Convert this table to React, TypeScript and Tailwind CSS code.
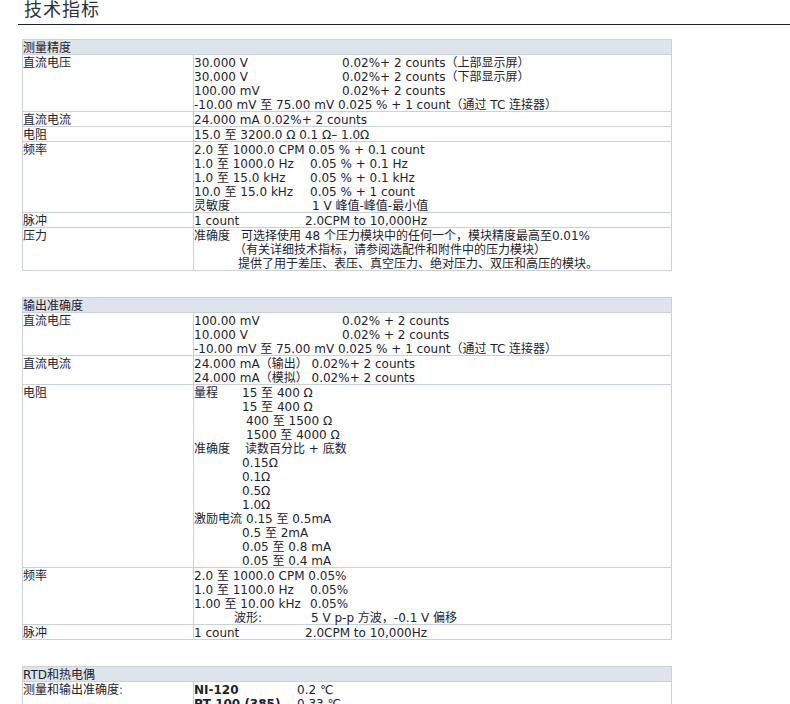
import type { ReactNode } from "react";

interface RowProps {
  label: ReactNode;
  lines: ReactNode[];
}

const Line = ({ children }: { children?: ReactNode }) => (
  <div className="h-[14px] leading-[16px] whitespace-pre">{children}</div>
);

const Row = ({ label, lines }: RowProps) => (
  <div className="flex">
    <div className="w-[171px] shrink-0 border-r border-[#c9d1d9]">
      <Line>{label}</Line>
    </div>
    <div className="flex-1">
      {lines.map((l, i) => (
        <Line key={i}>{l}</Line>
      ))}
    </div>
  </div>
);

const Section = ({ title, rows, className }: { title: string; rows: RowProps[]; className: string }) => (
  <div className={"ml-[22px] w-[650px] border border-[#c9d1d9] divide-y divide-[#c9d1d9] " + className}>
    <div className="bg-[#dde4ec]">
      <Line>{title}</Line>
    </div>
    {rows.map((r, i) => (
      <Row key={i} label={r.label} lines={r.lines} />
    ))}
  </div>
);

const measure: RowProps[] = [
  {
    label: "直流电压",
    lines: [
      <><span className="inline-block w-[148px]">30.000 V</span>0.02%+ 2 counts（上部显示屏）</>,
      <><span className="inline-block w-[148px]">30.000 V</span>0.02%+ 2 counts（下部显示屏）</>,
      <><span className="inline-block w-[148px]">100.00 mV</span>0.02%+ 2 counts</>,
      "-10.00 mV 至 75.00 mV 0.025 % + 1 count（通过 TC 连接器）",
    ],
  },
  { label: "直流电流", lines: ["24.000 mA 0.02%+ 2 counts"] },
  { label: "电阻", lines: ["15.0 至 3200.0 Ω 0.1 Ω– 1.0Ω"] },
  {
    label: "频率",
    lines: [
      "2.0 至 1000.0 CPM 0.05 % + 0.1 count",
      <><span className="inline-block w-[116px]">1.0 至 1000.0 Hz</span>0.05 % + 0.1 Hz</>,
      <><span className="inline-block w-[116px]">1.0 至 15.0 kHz</span>0.05 % + 0.1 kHz</>,
      <><span className="inline-block w-[116px]">10.0 至 15.0 kHz</span>0.05 % + 1 count</>,
      <><span className="inline-block w-[118px]">灵敏度</span>1 V 峰值-峰值-最小值</>,
    ],
  },
  {
    label: "脉冲",
    lines: [<><span className="inline-block w-[111px]">1 count</span>2.0CPM to 10,000Hz</>],
  },
  {
    label: "压力",
    lines: [
      <><span className="inline-block w-[47px]">准确度</span>可选择使用 48 个压力模块中的任何一个，模块精度最高至0.01%</>,
      <><span className="inline-block w-[40px]" />（有关详细技术指标，请参阅选配件和附件中的压力模块）</>,
      <><span className="inline-block w-[44px]" />提供了用于差压、表压、真空压力、绝对压力、双压和高压的模块。</>,
    ],
  },
];

const output: RowProps[] = [
  {
    label: "直流电压",
    lines: [
      <><span className="inline-block w-[148px]">100.00 mV</span>0.02% + 2 counts</>,
      <><span className="inline-block w-[148px]">10.000 V</span>0.02% + 2 counts</>,
      "-10.00 mV 至 75.00 mV 0.025 % + 1 count（通过 TC 连接器）",
    ],
  },
  {
    label: "直流电流",
    lines: ["24.000 mA（输出） 0.02%+ 2 counts", "24.000 mA（模拟） 0.02%+ 2 counts"],
  },
  {
    label: "电阻",
    lines: [
      <><span className="inline-block w-[48px]">量程</span>15 至 400 Ω</>,
      <><span className="inline-block w-[48px]" />15 至 400 Ω</>,
      <><span className="inline-block w-[52px]" />400 至 1500 Ω</>,
      <><span className="inline-block w-[52px]" />1500 至 4000 Ω</>,
      <><span className="inline-block w-[51px]">准确度</span>读数百分比 + 底数</>,
      <><span className="inline-block w-[48px]" />0.15Ω</>,
      <><span className="inline-block w-[48px]" />0.1Ω</>,
      <><span className="inline-block w-[48px]" />0.5Ω</>,
      <><span className="inline-block w-[48px]" />1.0Ω</>,
      <><span className="inline-block w-[52px]">激励电流</span>0.15 至 0.5mA</>,
      <><span className="inline-block w-[48px]" />0.5 至 2mA</>,
      <><span className="inline-block w-[48px]" />0.05 至 0.8 mA</>,
      <><span className="inline-block w-[48px]" />0.05 至 0.4 mA</>,
    ],
  },
  {
    label: "频率",
    lines: [
      "2.0 至 1000.0 CPM 0.05%",
      <><span className="inline-block w-[116px]">1.0 至 1100.0 Hz</span>0.05%</>,
      <><span className="inline-block w-[116px]">1.00 至 10.00 kHz</span>0.05%</>,
      <><span className="inline-block w-[40px]" /><span className="inline-block w-[77px]">波形:</span>5 V p-p 方波，-0.1 V 偏移</>,
    ],
  },
  {
    label: "脉冲",
    lines: [<><span className="inline-block w-[111px]">1 count</span>2.0CPM to 10,000Hz</>],
  },
];

const rtd: RowProps[] = [
  {
    label: <>测量和输出准确度<span className="text-[#555]">:</span></>,
    lines: [
      <><span className="inline-block w-[103px] font-bold">NI-120</span>0.2 ℃</>,
      <><span className="inline-block w-[103px] font-bold">PT 100 (385)</span>0.33 ℃</>,
      <><span className="inline-block w-[103px] font-bold">PT 100 (3926)</span>0.33 ℃</>,
    ],
  },
];

export default function App() {
  return (
    <div className="h-[704px] w-[790px] overflow-hidden bg-white text-[12px] text-[#1e2230] font-['DejaVu_Sans','Noto_Sans_CJK_SC',sans-serif]">
      <div className="ml-[18px] h-[26px] border-b border-[#1b1f3b]">
        <div className="-mt-[1px] pl-[6px] text-[18px] leading-[18px] tracking-[1px] text-[#2b2f40] font-['Noto_Sans_CJK_SC',sans-serif]">
          技术指标
        </div>
      </div>
      <Section title="测量精度" rows={measure} className="mt-[14px]" />
      <Section title="输出准确度" rows={output} className="mt-[26px]" />
      <Section title="RTD和热电偶" rows={rtd} className="mt-[26px]" />
    </div>
  );
}
